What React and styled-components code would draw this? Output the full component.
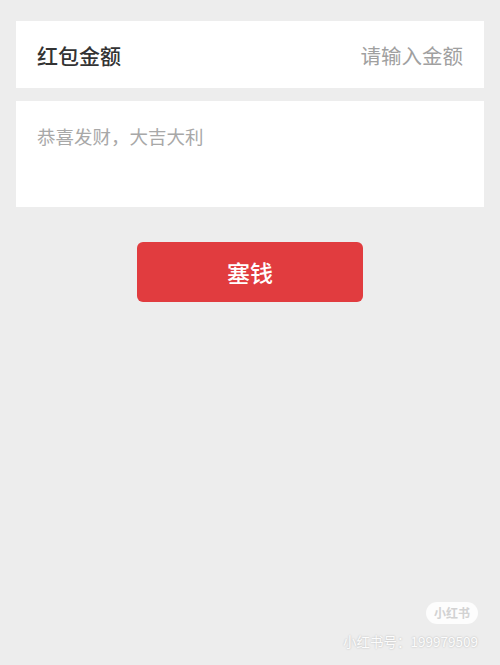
import React from "react";
import styled, { createGlobalStyle } from "styled-components";

const GlobalStyle = createGlobalStyle`
  html, body {
    margin: 0;
    padding: 0;
    background: #ededed;
  }
  body {
    font-family: "Noto Sans CJK SC", "Noto Sans", sans-serif;
  }
`;

const Page = styled.div`
  position: relative;
  width: 500px;
  height: 665px;
  box-sizing: border-box;
  padding: 21px 16px 0 16px;
  background: #ededed;
  display: flex;
  flex-direction: column;
  gap: 13px;
  overflow: hidden;
`;

const AmountRow = styled.div`
  height: 67px;
  background: #fff;
  display: flex;
  align-items: center;
  justify-content: space-between;
  padding: 0 21px;
`;

const Label = styled.span`
  font-size: 21px;
  font-weight: 500;
  color: #333;
`;

const AmountInput = styled.input`
  border: none;
  outline: none;
  background: transparent;
  text-align: right;
  font-family: inherit;
  font-size: 20.5px;
  width: 200px;
  color: #333;
  padding: 0;

  &::placeholder {
    color: #a0a0a0;
  }
`;

const WishBox = styled.textarea`
  height: 106px;
  box-sizing: border-box;
  border: none;
  outline: none;
  resize: none;
  background: #fff;
  padding: 22px 21px;
  font-family: inherit;
  font-size: 18.5px;
  line-height: 26px;
  color: #333;

  &::placeholder {
    color: #a8a8a8;
  }
`;

const ButtonRow = styled.div`
  display: flex;
  justify-content: center;
  margin-top: 22px;
`;

const StuffButton = styled.button`
  width: 226px;
  height: 60px;
  border: none;
  border-radius: 6px;
  background: #e13c3f;
  color: #fff;
  font-family: inherit;
  font-size: 23px;
  font-weight: 500;
  cursor: pointer;
`;

const Watermark = styled.div`
  position: absolute;
  right: 22px;
  bottom: 16px;
  display: flex;
  flex-direction: column;
  align-items: flex-end;
  gap: 9px;
  color: #fff;
`;

const Badge = styled.span`
  padding: 1px 8px;
  border-radius: 12px;
  background: rgba(255, 255, 255, 0.85);
  color: #d2d2d2;
  font-size: 12px;
  font-weight: 700;
  line-height: 20px;
`;

const Handle = styled.span`
  font-size: 13.5px;
  line-height: 16px;
  color: #fcfcfc;
  text-shadow: 0 0 2px rgba(0, 0, 0, 0.25);
`;

export default function App() {
  return (
    <>
      <GlobalStyle />
      <Page>
        <AmountRow>
          <Label>红包金额</Label>
          <AmountInput placeholder="请输入金额" />
        </AmountRow>
        <WishBox placeholder="恭喜发财，大吉大利" />
        <ButtonRow>
          <StuffButton>塞钱</StuffButton>
        </ButtonRow>
        <Watermark>
          <Badge>小红书</Badge>
          <Handle>小红书号：199979509</Handle>
        </Watermark>
      </Page>
    </>
  );
}
